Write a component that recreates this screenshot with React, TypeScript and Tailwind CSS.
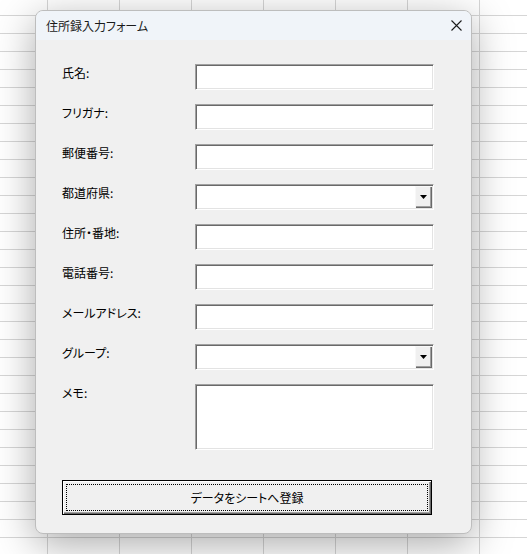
import React from 'react'

const font = "font-['Noto_Sans_CJK_JP','Noto_Sans',sans-serif] [font-feature-settings:'palt']"

const fields = [
  { label: '氏名:', kind: 'text' },
  { label: 'フリガナ:', kind: 'text' },
  { label: '郵便番号:', kind: 'text' },
  { label: '都道府県:', kind: 'combo' },
  { label: '住所・番地:', kind: 'text' },
  { label: '電話番号:', kind: 'text' },
  { label: 'メールアドレス:', kind: 'text' },
  { label: 'グループ:', kind: 'combo' },
]

// sunken 3D box used by text boxes, combos and the memo
const sunken =
  'border border-t-[#a0a0a0] border-l-[#a0a0a0] border-b-[#ffffff] border-r-[#ffffff] shadow-[inset_1px_1px_0_#696969,inset_-1px_-1px_0_#e3e3e3] bg-white'

function ComboArrow() {
  return (
    <div className="ml-auto flex h-full w-[17px] items-center justify-center bg-[#f0f0f0] shadow-[inset_1px_1px_0_#f8f8f8,inset_-1px_-1px_0_#696969,inset_-2px_-2px_0_#a0a0a0]">
      <svg width="7" height="4" viewBox="0 0 7 4" className="mb-[1px]">
        <path d="M0 0H7L3.5 4Z" fill="#000" />
      </svg>
    </div>
  )
}

export default function App() {
  return (
    <div className="h-[554px] w-full overflow-hidden bg-white bg-[linear-gradient(to_right,#d6d6d6_1px,transparent_1px),linear-gradient(to_bottom,#d6d6d6_1px,transparent_1px)] bg-[size:72px_18px] bg-[position:47px_15px] pl-[35px] pt-[10px]">
      <div className={`flex h-[524px] w-[437px] flex-col overflow-hidden rounded-[8px] border border-[#bdbdbd] bg-[#f0f0f0] shadow-[0_10px_40px_rgba(0,0,0,0.34)] ${font}`}>
        <div className="flex h-[29px] items-center justify-between bg-[#f0f4f9] pl-[10px] pr-[10px]">
          <span className="text-[12px] leading-none text-[#1a1a1a]">住所録入力フォーム</span>
          <svg width="11" height="11" viewBox="0 0 11 11" className="mr-[-1px]">
            <path d="M0.5 0.5L10.5 10.5M10.5 0.5L0.5 10.5" stroke="#1c1c1c" strokeWidth="1.1" />
          </svg>
        </div>

        <div className="flex flex-col gap-[14px] pl-[26px] pt-[24px]">
          {fields.map(f => (
            <div key={f.label} className="flex items-start">
              <div className="w-[133px] text-[12px] leading-[18px] text-black">{f.label}</div>
              <div className={`flex h-[26px] w-[239px] p-[1px] ${sunken}`}>
                {f.kind === 'combo' && <ComboArrow />}
              </div>
            </div>
          ))}
          <div className="flex items-start">
            <div className="w-[133px] text-[12px] leading-[18px] text-black">メモ:</div>
            <div className={`h-[66px] w-[239px] ${sunken}`} />
          </div>
        </div>

        <div className="pl-[26px] pt-[30px]">
          <div className="h-[35px] w-[370px] border border-black bg-[#f0f0f0] p-[3px] shadow-[inset_1px_1px_0_#ffffff,inset_-1px_-1px_0_#696969,inset_-2px_-2px_0_#a0a0a0]">
            <div className="flex h-full items-center justify-center border border-dotted border-black text-[12px] text-black">
              データをシートへ登録
            </div>
          </div>
        </div>
      </div>
    </div>
  )
}
